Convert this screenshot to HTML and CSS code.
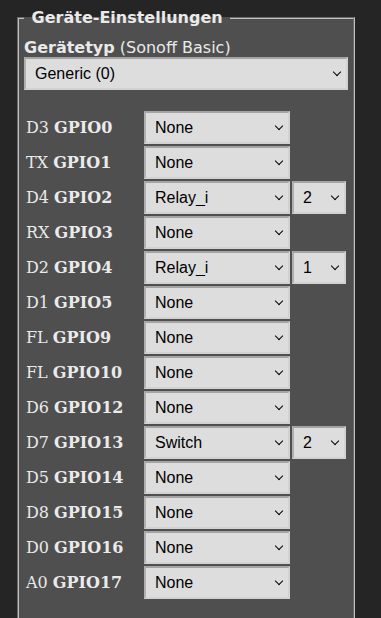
FILE: index.html
```html
<!DOCTYPE html>
<html lang="de">
  <head>
    <meta charset="UTF-8" />
    <meta name="viewport" content="width=device-width, initial-scale=1.0" />
    <title>Geräte-Einstellungen</title>
    <link rel="stylesheet" href="styles.css">
  </head>
  <body>
    <div class="page">
      <fieldset class="settings">
        <legend>&nbsp;Geräte-Einstellungen&nbsp;</legend>
        <form id="moduleForm">
          <p class="type-label"><b>Gerätetyp</b> (Sonoff Basic)</p>
          <span class="sel wide">
            <select id="g99">
              <option>Generic (0)</option>
            </select>
          </span>

          <table class="gpio">
            <tr>
              <td class="pin">D3 <b>GPIO0</b></td>
              <td class="col-func"><span class="sel"><select><option>None</option></select></span></td>
              <td class="col-idx"></td>
            </tr>
            <tr>
              <td class="pin">TX <b>GPIO1</b></td>
              <td><span class="sel"><select><option>None</option></select></span></td>
              <td></td>
            </tr>
            <tr>
              <td class="pin">D4 <b>GPIO2</b></td>
              <td><span class="sel"><select><option>Relay_i</option></select></span></td>
              <td><span class="sel"><select><option>2</option></select></span></td>
            </tr>
            <tr>
              <td class="pin">RX <b>GPIO3</b></td>
              <td><span class="sel"><select><option>None</option></select></span></td>
              <td></td>
            </tr>
            <tr>
              <td class="pin">D2 <b>GPIO4</b></td>
              <td><span class="sel"><select><option>Relay_i</option></select></span></td>
              <td><span class="sel"><select><option>1</option></select></span></td>
            </tr>
            <tr>
              <td class="pin">D1 <b>GPIO5</b></td>
              <td><span class="sel"><select><option>None</option></select></span></td>
              <td></td>
            </tr>
            <tr>
              <td class="pin">FL <b>GPIO9</b></td>
              <td><span class="sel"><select><option>None</option></select></span></td>
              <td></td>
            </tr>
            <tr>
              <td class="pin">FL <b>GPIO10</b></td>
              <td><span class="sel"><select><option>None</option></select></span></td>
              <td></td>
            </tr>
            <tr>
              <td class="pin">D6 <b>GPIO12</b></td>
              <td><span class="sel"><select><option>None</option></select></span></td>
              <td></td>
            </tr>
            <tr>
              <td class="pin">D7 <b>GPIO13</b></td>
              <td><span class="sel"><select><option>Switch</option></select></span></td>
              <td><span class="sel"><select><option>2</option></select></span></td>
            </tr>
            <tr>
              <td class="pin">D5 <b>GPIO14</b></td>
              <td><span class="sel"><select><option>None</option></select></span></td>
              <td></td>
            </tr>
            <tr>
              <td class="pin">D8 <b>GPIO15</b></td>
              <td><span class="sel"><select><option>None</option></select></span></td>
              <td></td>
            </tr>
            <tr>
              <td class="pin">D0 <b>GPIO16</b></td>
              <td><span class="sel"><select><option>None</option></select></span></td>
              <td></td>
            </tr>
            <tr>
              <td class="pin">A0 <b>GPIO17</b></td>
              <td><span class="sel"><select><option>None</option></select></span></td>
              <td></td>
            </tr>
          </table>
        </form>
      </fieldset>
    </div>
  </body>
</html>
```

FILE: styles.css
```css
html,
body {
  margin: 0;
  padding: 0;
  background: #252525;
  font-family: "DejaVu Sans", Verdana, sans-serif;
  font-size: 16px;
  color: #eaeaea;
}
.page {
  padding: 8px 0 0 17px;
}
.settings {
  box-sizing: border-box;
  width: 338px;
  margin: 0;
  padding: 5px 5px 60px;
  background: #4f4f4f;
  border: 2px groove #c0c0c0;
}
.settings legend {
  padding: 0 2px;
  font-weight: bold;
  line-height: 19px;
}
.type-label {
  margin: 6px 0 0;
  line-height: 19px;
}
.sel {
  position: relative;
  display: block;
}
.sel::after {
  content: "";
  position: absolute;
  right: 8px;
  top: 50%;
  width: 5px;
  height: 5px;
  margin-top: -5px;
  border-right: 1.5px solid #000;
  border-bottom: 1.5px solid #000;
  transform: rotate(45deg);
  pointer-events: none;
}
.sel select {
  display: block;
  box-sizing: border-box;
  width: 100%;
  height: 33px;
  margin: 0;
  padding: 5px 20px 5px 9px;
  appearance: none;
  -webkit-appearance: none;
  background: #dddddd;
  color: #000;
  font-family: "Liberation Sans", Arial, sans-serif;
  font-size: 16px;
  border-radius: 0;
  border-style: solid;
  border-width: 2px;
  border-color: #a4a4a4 #d2d2d2 #d2d2d2 #b0b0b0;
}
.gpio {
  margin-top: 19px;
  border-spacing: 2px;
}
.gpio td {
  padding: 0;
  height: 33px;
}
.gpio .pin {
  width: 116px;
  font-family: "DejaVu Serif", Georgia, serif;
}
.col-func {
  width: 146px;
}
.col-idx {
  width: 54px;
}
```
